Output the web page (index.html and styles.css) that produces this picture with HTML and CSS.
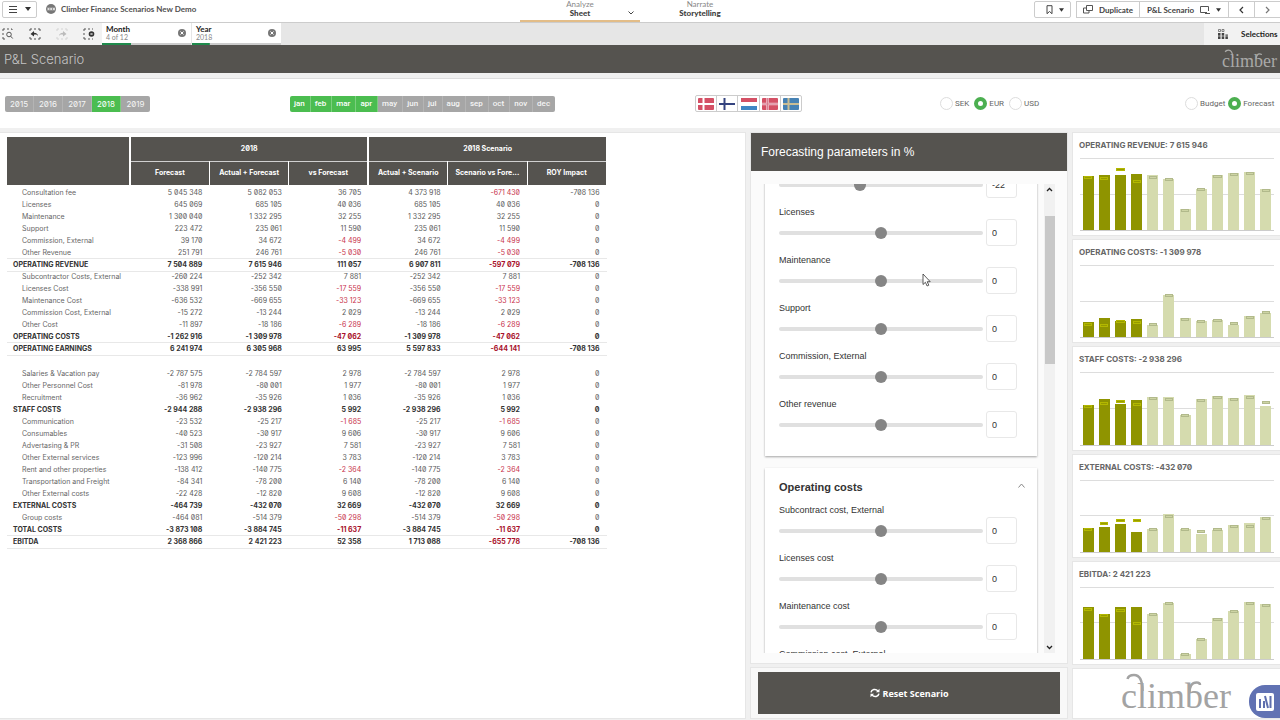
FILE: index.html
```html
<!DOCTYPE html>
<html lang="en">
<head>
	<meta charset="UTF-8">
	<title>Climber Finance Scenarios New Demo</title>
	<link rel="stylesheet" href="styles.css">
</head>
<body>
	<header class="topbar">
		<div class="topbar-left">
			<button class="btn menu-btn" aria-label="Menu">
				<svg width="10" height="9" viewBox="0 0 10 9"><path d="M1 1.5h8M1 4.5h8M1 7.5h8" stroke="#444" stroke-width="1"/></svg>
				<svg width="6" height="4" viewBox="0 0 6 4"><path d="M0 0h6L3 4z" fill="#333"/></svg>
			</button>
			<svg width="10" height="10" viewBox="0 0 10 10"><circle cx="5" cy="5" r="5" fill="#777"/><path d="M0 3.5h10M0 6.5h10" stroke="#aaa" stroke-width=".5"/><path d="M1.5 5h2M4.2 5h2M6.9 5h2" stroke="#fff" stroke-width="1.4"/></svg>
			<span class="app-title">Climber Finance Scenarios New Demo</span>
		</div>
		<nav class="tabs">
			<a class="tab active" href="#sheet"><small>Analyze</small><b>Sheet</b>
				<svg class="tab-arrow" width="6" height="4" viewBox="0 0 6 4"><path d="M.5 .5L3 3 5.5 .5" fill="none" stroke="#444"/></svg>
			</a>
			<a class="tab" href="#story"><small>Narrate</small><b>Storytelling</b></a>
		</nav>
		<div class="topbar-right">
			<button class="btn bookmark-btn" aria-label="Bookmarks">
				<svg width="7" height="10" viewBox="0 0 7 10"><path d="M1 .7h5v8L3.500 6.500 1 8.700z" fill="none" stroke="#444"/></svg>
				<svg width="5" height="4" viewBox="0 0 6 4"><path d="M0 0h6L3 4z" fill="#333"/></svg>
			</button>
			<div class="btn-group">
				<button class="btn duplicate-btn">
					<svg width="10" height="9" viewBox="0 0 10 9"><path d="M3.500 .5h6v5h-6zM3.500 3h-3v5h5.500V5.500" fill="none" stroke="#555"/></svg>
					Duplicate
				</button>
				<button class="btn sheet-btn">
					P&amp;L Scenario
					<svg width="10" height="8" viewBox="0 0 10 8"><path d="M7 6.500H.5v-6h8V5M5 7.500h5" fill="none" stroke="#555"/></svg>
					<svg width="5" height="4" viewBox="0 0 6 4"><path d="M0 0h6L3 4z" fill="#333"/></svg>
				</button>
				<button class="btn step-btn" aria-label="Previous sheet"><svg width="5" height="8" viewBox="0 0 5 8"><path d="M4 1L1 4l3 3" fill="none" stroke="#333" stroke-width="1.200"/></svg></button>
				<button class="btn step-btn" aria-label="Next sheet"><svg width="5" height="8" viewBox="0 0 5 8"><path d="M1 1l3 3-3 3" fill="none" stroke="#777" stroke-width="1.200"/></svg></button>
			</div>
		</div>
	</header>

	<div class="selections">
		<div class="tools">
			<button aria-label="Smart search"><svg width="12" height="12" viewBox="0 0 12 12" fill="none" stroke="#555"><path d="M1 3V1h2M5 1h2M9 1h1v1M1 5v2M1 9v2h2" /><circle cx="7" cy="6.500" r="2.300"/><path d="M8.700 8.200l2 2.300"/></svg></button>
			<button aria-label="Step back"><svg width="12" height="12" viewBox="0 0 12 12" fill="none" stroke="#555"><path d="M1 3V1h2M5 1h2M9 1h2v2M1 9v2h2M5 11h2M9 11h2V9"/><path d="M5 3L1.500 6 5 8.500V6.700c2-.3 3 0 4 1.500C9 6 7.500 4.800 5 4.800z" fill="#333" stroke="none"/></svg></button>
			<button aria-label="Step forward"><svg width="12" height="12" viewBox="0 0 12 12" fill="none" stroke="#d4d4d4"><path d="M1 3V1h2M5 1h2M9 1h2v2M1 9v2h2M5 11h2M9 11h2V9"/><path d="M7 3l3.500 3L7 8.500V6.700c-2-.3-3 0-4 1.500C3 6 4.500 4.800 7 4.800z" fill="#bbb" stroke="none"/></svg></button>
			<button aria-label="Clear all selections"><svg width="12" height="12" viewBox="0 0 12 12" fill="none" stroke="#555"><path d="M1 3V1h2M5 1h2M9 1h1M1 5v2M1 9v2h2M5 11h2M9 11h1"/><circle cx="8.500" cy="6" r="2.800" fill="#333" stroke="none"/><path d="M7.500 5l2 2M9.500 5l-2 2" stroke="#fff" stroke-width=".7"/></svg></button>
		</div>
		<div class="chip chip-month">
			<div class="chip-text"><b>Month</b><span>4 of 12</span></div>
			<button class="chip-close" aria-label="Clear month"><svg width="8" height="8" viewBox="0 0 8 8"><circle cx="4" cy="4" r="4" fill="#777"/><path d="M2.500 2.500l3 3M5.500 2.500l-3 3" stroke="#fff"/></svg></button>
		</div>
		<div class="chip chip-year">
			<div class="chip-text"><b>Year</b><span>2018</span></div>
			<button class="chip-close" aria-label="Clear year"><svg width="8" height="8" viewBox="0 0 8 8"><circle cx="4" cy="4" r="4" fill="#777"/><path d="M2.500 2.500l3 3M5.500 2.500l-3 3" stroke="#fff"/></svg></button>
		</div>
		<button class="selections-btn">
			<svg width="10" height="10" viewBox="0 0 10 10"><path d="M.5 .5h2v2h-2zM4 .5h2v2H4z" fill="none" stroke="#666" stroke-width=".8"/><path d="M0 4h2.500v6H0zM3.700 4h2.500v6H3.700zM7.400 5.500h2.500V10H7.400z" fill="#444"/><path d="M0 7h10" stroke="#f2f2f2" stroke-width=".6"/></svg>
			Selections
		</button>
	</div>

	<div class="sheet-header">
		<h1>P&amp;L Scenario</h1>
		<svg class="logo logo-small" viewBox="0 0 112 48"><use href="#climber-mark"/><text x="0" y="39">climber</text></svg>
	</div>

	<section class="filters">
		<div class="button-row" id="years"></div>
		<div class="button-row" id="months"></div>
		<div class="flags">
			<button aria-label="Denmark"><svg width="16" height="12"><rect width="16" height="12" rx="1" fill="#d45065"/><path d="M5.500 0v12M0 6h16" stroke="#fff" stroke-width="2"/></svg></button>
			<button aria-label="Finland"><svg width="16" height="12"><rect width="16" height="12" rx="1" fill="#fff"/><path d="M5.500 0v12M0 6h16" stroke="#34437f" stroke-width="2"/></svg></button>
			<button aria-label="Netherlands"><svg width="16" height="12"><rect width="16" height="12" rx="1" fill="#fff"/><path d="M0 2h16" stroke="#d45065" stroke-width="4"/><path d="M0 10h16" stroke="#3f86c4" stroke-width="4"/></svg></button>
			<button aria-label="Norway"><svg width="16" height="12"><rect width="16" height="12" rx="1" fill="#d45065"/><path d="M5.500 0v12M0 6h16" stroke="#f0c4ce" stroke-width="2.500"/><path d="M5.500 0v12M0 6h16" stroke="#d87f92" stroke-width="1"/></svg></button>
			<button aria-label="Sweden"><svg width="16" height="12"><rect width="16" height="12" rx="1" fill="#4682b4"/><path d="M5.500 0v12M0 6h16" stroke="#c9bd94" stroke-width="2"/></svg></button>
		</div>
		<div class="radios">
			<label><input type="radio" name="currency">SEK</label>
			<label><input type="radio" name="currency" checked>EUR</label>
			<label><input type="radio" name="currency">USD</label>
		</div>
		<div class="radios">
			<label><input type="radio" name="basis">Budget</label>
			<label><input type="radio" name="basis" checked>Forecast</label>
		</div>
	</section>

	<main>
		<section class="panel table-panel">
			<table>
				<colgroup><col class="col-name"><col span="6"></colgroup>
				<thead>
					<tr><th rowspan="2" class="group"></th><th colspan="3" class="group">2018</th><th colspan="3">2018 Scenario</th></tr>
					<tr><th>Forecast</th><th>Actual + Forecast</th><th class="group">vs Forecast</th><th>Actual + Scenario</th><th>Scenario vs Fore...</th><th>ROY Impact</th></tr>
				</thead>
				<tbody id="pl"></tbody>
			</table>
		</section>

		<div class="middle">
			<section class="panel params">
				<h2>Forecasting parameters in %</h2>
				<div class="scroll-area">
					<div class="cards" id="cards">
						<div class="card">
							<div class="card-head"><h3>Operating revenue</h3></div>
							<div id="revenue"></div>
						</div>
						<div class="card">
							<div class="card-head"><h3>Operating costs</h3>
								<button aria-label="Collapse"><svg width="7" height="5" viewBox="0 0 7 5"><path d="M.5 4.500l3-3.500 3 3.500" fill="none" stroke="#888"/></svg></button>
							</div>
							<div id="costs"></div>
						</div>
					</div>
					<div class="scrollbar">
						<svg width="7" height="5" viewBox="0 0 7 5"><path d="M1 4l2.500-2.500L6 4" fill="none" stroke="#222" stroke-width="1.300"/></svg>
						<div class="scroll-thumb"></div>
						<svg width="7" height="5" viewBox="0 0 7 5"><path d="M1 1l2.500 2.500L6 1" fill="none" stroke="#222" stroke-width="1.300"/></svg>
					</div>
				</div>
				<svg class="cursor" width="9" height="14" viewBox="0 0 9 14"><path d="M1 1v10.500l2.400-2.200 1.700 3.700 1.700-.8-1.600-3.500H8.200z" fill="#fff" stroke="#333" stroke-width=".8"/></svg>
			</section>
			<section class="panel reset-panel">
				<button class="reset-btn">
					<svg width="10" height="10" viewBox="0 0 10 10"><path d="M1 4.300C1.500 1.500 5.500 .3 8 2.900M9 5.700C8.500 8.500 4.500 9.700 2 7.100" fill="none" stroke="#fff" stroke-width="1.500"/><path d="M9.500 .7v3.600H5.900zM.5 9.300V5.700h3.600z" fill="#fff"/></svg>
					Reset Scenario
				</button>
			</section>
		</div>

		<aside>
			<div class="kpis" id="kpis"></div>
			<div class="panel logo-panel">
				<svg class="logo logo-big" viewBox="0 0 112 48">
					<g id="climber-mark" fill="none" stroke="currentColor" stroke-width="2.500"><path d="M21.500 22C21.500 11 19 6 13 6c-4 0-6 2-6.500 4"/><path d="M68.500 24c0-8 3-10.500 7-10.500 2 0 3.500 1 3.500 2.500"/></g>
					<text x="0" y="39">climber</text>
				</svg>
			</div>
		</aside>
	</main>

	<button class="badge" aria-label="Open menu">
		<svg width="18" height="18" viewBox="0 0 18 18"><rect width="18" height="18" rx="2" fill="#fff"/><path d="M4 6v9M8 8v7M9 3l3 12M14.500 3v12" stroke="#5f6fae" stroke-width="2"/></svg>
	</button>
	<script src="script.js"></script>
</body>
</html>
```

FILE: styles.css
```css
* {
	box-sizing: border-box;
}
body {
	margin: 0;
	height: 100vh;
	display: flex;
	flex-direction: column;
	overflow: hidden;
	background: #f0f0f0;
	color: #595959;
	font-family: Inter, "Liberation Sans", sans-serif;
	font-feature-settings: "zero";
	font-size: 8px;
}
button {
	margin: 0;
	padding: 0;
	border: 0;
	background: none;
	font: inherit;
	color: inherit;
}
svg {
	display: block;
	flex: none;
}
h1, h2, h3 {
	margin: 0;
}

/* top bar */
.topbar {
	display: grid;
	grid-template-columns: 1fr auto 1fr;
	height: 23px;
	background: #fff;
	border-bottom: 1px solid #ccc;
	font-family: Lato, sans-serif;
	font-weight: 700;
	color: #505050;
}
.topbar-left {
	display: flex;
	align-items: center;
	gap: 5px;
	height: 18px;
	padding-left: 2px;
}
.btn {
	display: flex;
	align-items: center;
	justify-content: center;
	gap: 6px;
	height: 17px;
	border: 1px solid #ccc;
	border-radius: 2px;
	color: #444;
	white-space: nowrap;
}
.menu-btn {
	width: 35px;
	gap: 7px;
	margin-right: 4px;
}
.tabs {
	display: flex;
}
.tab {
	position: relative;
	display: flex;
	flex-direction: column;
	align-items: center;
	width: 120px;
	color: #404040;
	line-height: 9px;
	text-decoration: none;
}
.tab small {
	font-size: 8px;
	font-weight: 400;
	color: #888;
}
.tab.active {
	border-bottom: 2px solid #e3bd88;
}
.tab-arrow {
	position: absolute;
	right: 6px;
	top: 11px;
}
.topbar-right {
	display: flex;
	justify-content: flex-end;
	gap: 5px;
	padding-top: 1px;
}
.bookmark-btn {
	width: 37px;
	padding-left: 5px;
}
.btn-group {
	display: flex;
}
.btn-group .btn {
	border-radius: 0;
	border-right: 0;
}
.duplicate-btn {
	width: 63px;
}
.sheet-btn {
	width: 89px;
}
.step-btn {
	width: 26px;
}

/* current selections */
.selections {
	display: flex;
	height: 22px;
	background: #e6e6e6;
	font-family: Lato, sans-serif;
}
.tools {
	display: flex;
	align-items: center;
	gap: 15px;
	width: 102px;
	padding-left: 2px;
	background: #f2f2f2;
}
.chip {
	display: flex;
	align-items: center;
	justify-content: space-between;
	width: 89px;
	margin-right: 1px;
	padding: 0 5px 0 4px;
}
.chip-month {
	background: linear-gradient(#1f8a4c, #1f8a4c) 0 100% / 33% 2px no-repeat, linear-gradient(#ccc, #ccc) 0 100% / 100% 2px no-repeat #fff;
}
.chip-year {
	background: linear-gradient(#1f8a4c, #1f8a4c) 0 100% / 20% 2px no-repeat, linear-gradient(#ccc, #ccc) 0 100% / 100% 2px no-repeat #fff;
}
.chip-text {
	display: flex;
	flex-direction: column;
	line-height: 8px;
	padding-bottom: 2px;
}
.chip-text b {
	color: #222;
	font-size: 8px;
}
.chip-text span {
	color: #888;
	font-size: 7px;
}
.chip-close {
	padding-bottom: 2px;
}
.selections-btn {
	display: flex;
	align-items: center;
	gap: 13px;
	width: 76px;
	margin-left: auto;
	padding-left: 14px;
	background: #f2f2f2;
	color: #222;
	font-weight: 700;
}
.sheet-header {
	display: flex;
	align-items: center;
	justify-content: space-between;
	height: 28px;
	padding: 0 2px 0 4px;
	background: #55534f;
	color: #c4c4c4;
}
.sheet-header h1 {
	font-size: 13px;
	font-weight: 300;
}
.logo {
	font-family: "Liberation Serif", serif;
	font-size: 36px;
	fill: currentColor;
}
.logo-small {
	width: 56px;
	height: 24px;
	color: #a9a9a7;
}

/* filters */
.filters {
	display: grid;
	grid-template-columns: 57fr 81fr 49fr 49fr 19fr;
	align-items: center;
	height: 50px;
	margin: 5px 0;
	padding-left: 5px;
	background: #fff;
	border-top: 1px solid #ddd;
}
.button-row {
	display: flex;
	height: 16px;
}
.button-row button {
	padding: 0 5px 0 4px;
	background: #a6a6a6;
	border-right: 1px solid #b4b4b4;
	color: #f5f5f5;
}
#years button {
	width: 29px;
	padding: 0;
}
#months {
	font-family: Roboto, sans-serif;
	font-weight: 500;
}
.button-row button.on {
	background: #4bbd50;
	border-color: #7bcf7e;
	color: #fff;
}
.button-row button:first-child {
	border-radius: 2px 0 0 2px;
}
.button-row button:last-child {
	border-radius: 0 2px 2px 0;
	border-right: 0;
}
.flags {
	display: flex;
	width: 107px;
	height: 17px;
	border: 1px solid #ccc;
	border-radius: 2px;
}
.flags button {
	flex: 1;
	display: flex;
	align-items: center;
	justify-content: center;
}
.flags button + button {
	border-left: 1px solid #ccc;
}
.radios {
	display: flex;
	gap: 5px;
	font-family: Roboto, sans-serif;
	color: #666;
}
.radios label {
	display: flex;
	align-items: center;
	gap: 2px;
}
.radios:last-child {
	gap: 3px;
}
.radios input {
	appearance: none;
	width: 13px;
	height: 13px;
	margin: 0;
	border: 1px solid #ddd;
	border-radius: 50%;
	background: #fff;
}
.radios input:checked {
	border: 4px solid #4caf50;
}

/* sheet grid */
main {
	flex: 1;
	min-height: 0;
	display: grid;
	grid-template-columns: 1fr 316px 207px;
	gap: 6px;
	padding-bottom: 2px;
}
.panel {
	background: #fff;
	box-shadow: 0 0 0 1px #e6e6e6;
}
.table-panel {
	padding: 4px 7px;
}
table {
	width: 600px;
	border-collapse: collapse;
	table-layout: fixed;
	font-size: 7px;
	line-height: 10px;
}
.col-name {
	width: 123px;
}
th {
	height: 24px;
	padding: 0;
	background: #55534f;
	border: 0 solid #fff;
	border-right-width: 1px;
	color: #fff;
	font-weight: 700;
	white-space: nowrap;
}
th.group {
	border-right-width: 2px;
}
tr + tr th {
	border-top: 1px solid #d0d0d0;
}
tbody td, tbody th {
	height: 12px;
	padding: 1px 7px 1px 0;
	text-align: right;
	white-space: nowrap;
}
tbody tr th:first-child {
	padding-left: 15px;
	background: none;
	border: 0;
	color: #666;
	font-weight: 400;
	text-align: left;
}
tbody tr:first-child > * {
	height: 14px;
	padding-top: 3px;
}
tbody tr.total > * {
	color: #333;
	font-weight: 700;
}
tbody tr.total th:first-child {
	padding-left: 6px;
	color: #333;
	font-weight: 700;
}
tbody tr.lined {
	box-shadow: 0 -1px #e8e8e8, 0 1px #e8e8e8;
}
tbody td.neg {
	color: #c8324b;
}
tbody .total td.neg {
	color: #a8102a;
}
tbody .blank td {
	height: 13px;
}

/* parameters */
.middle {
	display: flex;
	flex-direction: column;
	gap: 5px;
	min-height: 0;
	font-family: "Liberation Sans", Arial, sans-serif;
	font-size: 9px;
	color: #333;
}
.params {
	position: relative;
	flex: 1;
	display: flex;
	flex-direction: column;
	min-height: 0;
	background: #fbfbfb;
}
.params h2 {
	padding: 0 10px;
	background: #55534f;
	color: #fff;
	font-size: 12px;
	font-weight: 400;
	line-height: 38px;
}
.scroll-area {
	flex: 1;
	min-height: 0;
	display: flex;
	margin: 13px 12px 10px;
}
.cards {
	flex: 1;
	overflow: hidden;
	padding: 0 7px 0 2px;
}
.card {
	margin-bottom: 12px;
	padding: 10px 20px 10px 14px;
	background: #fff;
	box-shadow: 0 1px 2px rgba(0, 0, 0, .35);
}
.card-head {
	display: flex;
	justify-content: space-between;
	margin-right: -8px;
	height: 26px;
}
.card-head h3 {
	font-size: 11px;
	line-height: 18px;
}
.card-head button {
	height: 14px;
}
.param {
	display: grid;
	grid-template-columns: 1fr 31px;
	align-content: start;
	column-gap: 3px;
	height: 48px;
}
.param label {
	grid-column: 1 / 3;
	line-height: 13px;
}
.param input[type=range] {
	appearance: none;
	width: 100%;
	height: 27px;
	margin: 0;
	background: none;
}
.param input[type=range]::-webkit-slider-runnable-track {
	height: 4px;
	border-radius: 2px;
	background: #e0e0e0;
}
.param input[type=range]::-webkit-slider-thumb {
	appearance: none;
	width: 12px;
	height: 12px;
	margin-top: -4px;
	border-radius: 50%;
	background: #858585;
}
.param input[type=text] {
	width: 31px;
	height: 27px;
	padding: 0 5px;
	border: 1px solid #e8e8e8;
	border-radius: 3px;
	color: #333;
	font: inherit;
}
.scrollbar {
	display: flex;
	flex-direction: column;
	align-items: center;
	width: 11px;
	padding: 3px 0;
	background: #f1f1f1;
}
.scroll-thumb {
	width: 10px;
	height: 148px;
	margin: 24px 0 auto;
	background: #c8c8c8;
}
.cursor {
	position: absolute;
	left: 171px;
	top: 140px;
}
.reset-panel {
	padding: 4px 7px;
	background: #f8f8f8;
}
.reset-btn {
	display: flex;
	align-items: center;
	justify-content: center;
	gap: 3px;
	width: 100%;
	height: 42px;
	background: #55534f;
	color: #fff;
	font: 700 9px "Open Sans", sans-serif;
}

/* kpi charts */
aside {
	display: flex;
	flex-direction: column;
	gap: 5px;
	min-height: 0;
}
.kpis {
	flex: 1;
	display: grid;
	grid-auto-rows: 1fr;
	gap: 5px;
}
.kpi {
	display: flex;
	flex-direction: column;
	padding: 6px 6px 4px;
}
.kpi h4 {
	margin: 0 0 6px;
	color: #666;
	font-size: 8px;
	font-weight: 700;
	line-height: 13px;
}
.plot {
	flex: 1;
	display: flex;
	margin: 0 0 0 1px;
	border-bottom: 1px solid #ccc;
	background: linear-gradient(#ddd, #ddd) 0 0 / 100% 1px no-repeat, linear-gradient(#ddd, #ddd) 0 50% / 100% 1px no-repeat;
}
.slot {
	position: relative;
	flex: 1;
	display: flex;
	align-items: flex-end;
	justify-content: center;
}
.bar {
	width: 11px;
	background: #d5dbae;
}
.actual .bar {
	background: #8f9400;
}
.mark {
	position: absolute;
	left: 4px;
	right: 4px;
	height: 3px;
	border: 1px solid #b1b98b;
	background: #cdd4a4;
}
.actual .mark {
	border-color: #b3b800;
	background: #969b00;
}
.logo-panel {
	height: 49px;
	padding: 0 48px;
}
.logo-big {
	width: 112px;
	height: 48px;
	color: #a3a3a3;
}
.badge {
	position: fixed;
	right: 0;
	bottom: 2px;
	width: 31px;
	height: 33px;
	padding: 0 0 0 7px;
	border-radius: 16px 0 0 16px;
	background: #6172b3;
}
```

FILE: script.js
```javascript
function format(n) {
	return String(n).replace(/\B(?=(\d{3})+$)/g, ' ')
}

function addButtons(id, names, selected) {
	document.getElementById(id).innerHTML = names.map(function(name) {
		return '<button' + (selected.indexOf(name) > -1 ? ' class="on"' : '') + '>' + name + '</button>'
	}).join('')
}
addButtons('years', ['2015', '2016', '2017', '2018', '2019'], ['2018'])
addButtons('months', ['jan', 'feb', 'mar', 'apr', 'may', 'jun', 'jul', 'aug', 'sep', 'oct', 'nov', 'dec'], ['jan', 'feb', 'mar', 'apr'])

// name, six values, row class
var rows = [
	['Consultation fee', 5045348, 5082053, 36705, 4373918, -671430, -708136],
	['Licenses', 645069, 685105, 40036, 685105, 40036, 0],
	['Maintenance', 1300040, 1332295, 32255, 1332295, 32255, 0],
	['Support', 223472, 235061, 11590, 235061, 11590, 0],
	['Commission, External', 39170, 34672, -4499, 34672, -4499, 0],
	['Other Revenue', 251791, 246761, -5030, 246761, -5030, 0],
	['OPERATING REVENUE', 7504889, 7615946, 111057, 6907811, -597079, -708136, 'total lined'],
	['Subcontractor Costs, External', -260224, -252342, 7881, -252342, 7881, 0],
	['Licenses Cost', -338991, -356550, -17559, -356550, -17559, 0],
	['Maintenance Cost', -636532, -669655, -33123, -669655, -33123, 0],
	['Commission Cost, External', -15272, -13244, 2029, -13244, 2029, 0],
	['Other Cost', -11897, -18186, -6289, -18186, -6289, 0],
	['OPERATING COSTS', -1262916, -1309978, -47062, -1309978, -47062, 0, 'total'],
	['OPERATING EARNINGS', 6241974, 6305968, 63995, 5597833, -644141, -708136, 'total lined'],
	null,
	['Salaries & Vacation pay', -2787575, -2784597, 2978, -2784597, 2978, 0],
	['Other Personnel Cost', -81978, -80001, 1977, -80001, 1977, 0],
	['Recruitment', -36962, -35926, 1036, -35926, 1036, 0],
	['STAFF COSTS', -2944288, -2938296, 5992, -2938296, 5992, 0, 'total'],
	['Communication', -23532, -25217, -1685, -25217, -1685, 0],
	['Consumables', -40523, -30917, 9606, -30917, 9606, 0],
	['Advertasing & PR', -31508, -23927, 7581, -23927, 7581, 0],
	['Other External services', -123996, -120214, 3783, -120214, 3783, 0],
	['Rent and other properties', -138412, -140775, -2364, -140775, -2364, 0],
	['Transportation and Freight', -84341, -78200, 6140, -78200, 6140, 0],
	['Other External costs', -22428, -12820, 9608, -12820, 9608, 0],
	['EXTERNAL COSTS', -464739, -432070, 32669, -432070, 32669, 0, 'total'],
	['Group costs', -464081, -514379, -50298, -514379, -50298, 0],
	['TOTAL COSTS', -3873108, -3884745, -11637, -3884745, -11637, 0, 'total'],
	['EBITDA', 2368866, 2421223, 52358, 1713088, -655778, -708136, 'total lined']
]
document.getElementById('pl').innerHTML = rows.map(function(row) {
	if(!row) return '<tr class="blank"><td colspan="7"></td></tr>'
	var html = '<tr class="' + (row[7] || '') + '"><th scope="row">' + row[0].replace('&', '&amp;') + '</th>'
	for(var i = 1; i < 7; i++) {
		var red = (i === 3 || i === 5) && row[i] < 0
		html += '<td' + (red ? ' class="neg"' : '') + '>' + format(row[i]) + '</td>'
	}
	return html + '</tr>'
}).join('')

function addParams(id, params) {
	document.getElementById(id).innerHTML = params.map(function(p, i) {
		var key = id + i
		return '<div class="param"><label for="' + key + '">' + p[0] + '</label>' +
			'<input type="range" id="' + key + '" min="-100" max="100" value="' + p[1] + '">' +
			'<input type="text" aria-label="' + p[0] + ' %" value="' + p[1] + '"></div>'
	}).join('')
}
addParams('revenue', [['Consultation fee', -22], ['Licenses', 0], ['Maintenance', 0], ['Support', 0], ['Commission, External', 0], ['Other revenue', 0]])
addParams('costs', [['Subcontract cost, External', 0], ['Licenses cost', 0], ['Maintenance cost', 0], ['Commission cost, External', 0], ['Other cost', 0]])
document.getElementById('cards').scrollTop = 62

document.querySelectorAll('.param').forEach(function(param) {
	var range = param.children[1]
	var text = param.children[2]
	range.addEventListener('input', function() {
		text.value = range.value
	})
	text.addEventListener('change', function() {
		range.value = text.value
	})
})

// bars and marks are on a scale of 0 to 74
var kpis = [
	['OPERATING REVENUE: 7 615 946', [56, 57, 57, 58, 57, 53, 22, 42, 57, 59, 60, 42], [54, 53, 63, 50, 55, 52, 21, 42, 56, 58, 59, 41]],
	['OPERATING COSTS: -1 309 978', [16, 20, 17, 19, 13, 43, 20, 17, 18, 13, 22, 25], [14, 13, 17, 16, 14, 43, 19, 17, 18, 15, 21, 26]],
	['STAFF COSTS: -2 938 296', [41, 47, 42, 46, 49, 49, 30, 47, 50, 48, 51, 40], [40, 43, 45, 42, 48, 47, 30, 46, 49, 47, 49, 44]],
	['EXTERNAL COSTS: -432 070', [24, 25, 28, 20, 23, 39, 23, 18, 22, 27, 30, 36], [23, 29, 33, 33, 23, 37, 23, 21, 23, 26, 26, 35]],
	['EBITDA: 2 421 223', [53, 46, 53, 53, 46, 57, 5, 21, 42, 49, 58, 56], [51, 45, 50, 37, 46, 57, 5, 20, 41, 49, 57, 55]]
]
document.getElementById('kpis').innerHTML = kpis.map(function(kpi) {
	var bars = kpi[1].map(function(v, i) {
		return '<div class="slot' + (i < 4 ? ' actual' : '') + '">' +
			'<div class="bar" style="height:' + v / 74 * 100 + '%"></div>' +
			'<div class="mark" style="bottom:' + (kpi[2][i] - 2) / 74 * 100 + '%"></div></div>'
	}).join('')
	return '<div class="panel kpi"><h4>' + kpi[0] + '</h4><div class="plot">' + bars + '</div></div>'
}).join('')
```
